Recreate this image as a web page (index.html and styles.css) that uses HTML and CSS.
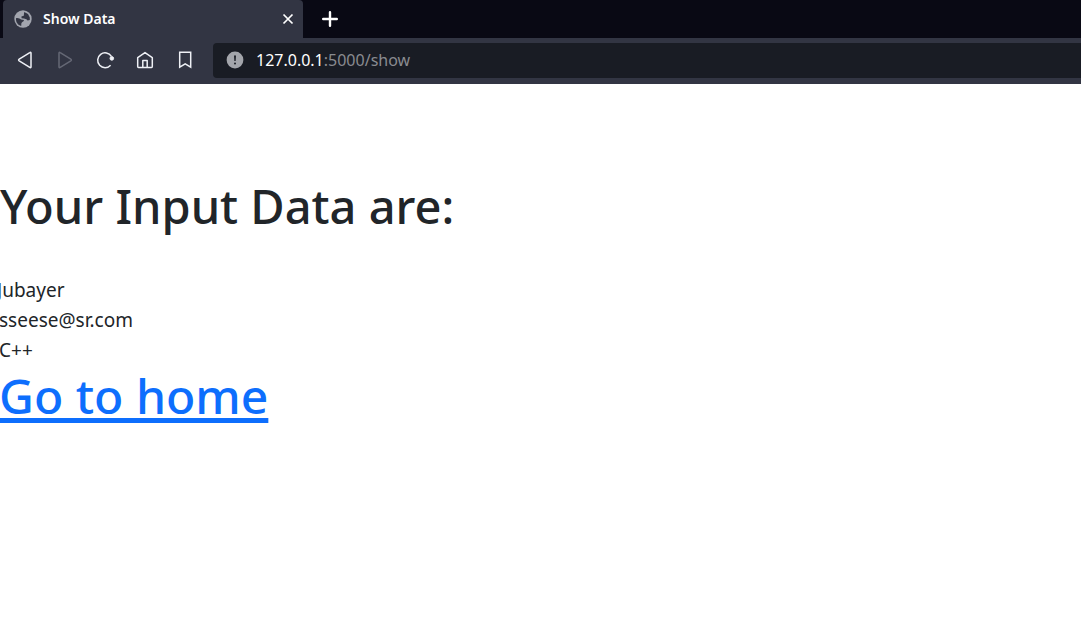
FILE: index.html
```html
<!DOCTYPE html>
<html lang="en">
<head>
<meta charset="utf-8">
<title>Show Data</title>
<link rel="stylesheet" href="styles.css">
</head>
<body>
<header class="browser">
  <div class="tabs">
    <div class="tab">
      <svg class="globe" viewBox="0 0 18 18" aria-hidden="true"><circle cx="9" cy="9" r="8.7" fill="#a2a5ae"/><path d="M2 8.2 C4 7.6 6 8.6 7 9.6 L10 10 C9.8 12 7.6 11.8 7.4 13.2 L7.2 16 C4.2 15.4 2 12.6 2 9.6ZM10.2 2 L14 4 L15.8 7.4 L15.8 10 L13.6 10.6 L12.4 9.2 L10 8.4 L7.6 8.2 L7.4 6.4 L9.8 5.8Z" fill="#323543"/></svg>
      <span class="tab-title">Show Data</span>
      <button class="icon-button close" aria-label="Close tab"><svg viewBox="0 0 12 12"><path d="M1.5 1.5 10.5 10.5M10.5 1.5 1.5 10.5" stroke="#fff" stroke-width="1.7"/></svg></button>
    </div>
    <button class="icon-button new-tab" aria-label="New tab"><svg viewBox="0 0 16 16"><path d="M8 1.2V14.8M1.2 8H14.8" stroke="#fff" stroke-width="2.4" stroke-linecap="round"/></svg></button>
  </div>
  <nav class="toolbar" aria-label="Browser">
    <button class="icon-button tool" aria-label="Back"><svg viewBox="0 0 20 20"><path d="M14.8 2.6 Q16 1.8 16 3.3 V16.7 Q16 18.2 14.8 17.4 L4.2 10.8 Q3 10 4.2 9.2Z"/></svg></button>
    <button class="icon-button tool" aria-label="Forward" disabled><svg viewBox="0 0 20 20"><path d="M5.2 2.6 Q4 1.8 4 3.3 V16.7 Q4 18.2 5.2 17.4 L15.8 10.8 Q17 10 15.8 9.2Z"/></svg></button>
    <button class="icon-button tool" aria-label="Reload"><svg viewBox="0 0 20 20"><path d="M16.4 6.4 A7.4 7.4 0 1 0 15.6 15.2"/><circle cx="16.8" cy="8.4" r="1.8" fill="#eef0f5" stroke-width="1"/></svg></button>
    <button class="icon-button tool" aria-label="Home"><svg viewBox="0 0 20 20"><path d="M2.7 16.6 V7.6 L10 2.6 L17.3 7.6 V16.6 Q17.3 17.4 16.5 17.4 H3.5 Q2.7 17.4 2.7 16.6ZM7.8 17.4V10.6H12.2V17.4" stroke-linejoin="round"/></svg></button>
    <button class="icon-button tool" aria-label="Bookmark"><svg viewBox="0 0 20 20"><path d="M4.7 2.3H15.7V17.2L10.2 13.8L4.7 17.2Z"/></svg></button>
    <div class="address">
      <svg class="notice" viewBox="0 0 18 18" aria-hidden="true"><circle cx="9" cy="9" r="8.4" fill="#a3a5ab"/><path d="M8 4.6H10L9.6 10H8.4Z" fill="#191c24"/><circle cx="9" cy="12.4" r="1" fill="#191c24"/></svg>
      <span class="url"><span class="host">127.0.0.1</span>:5000/show</span>
    </div>
  </nav>
</header>
<main class="page">
  <h1 class="heading">Your Input Data are:</h1>
  <div class="data">
    <p class="clipped">Jubayer</p>
    <p>sseese@sr.com</p>
    <p>C++</p>
  </div>
  <h2 class="heading home"><a href="/">Go to home</a></h2>
</main>
</body>
</html>
```

FILE: styles.css
```css
* { box-sizing: border-box; }
body {
  margin: 0;
  background: #fff;
  color: #212529;
  font-family: "Segoe UI", "Noto Sans", "Open Sans", sans-serif;
  overflow-x: hidden;
}
h1, h2, p { margin: 0; }
.browser { background: #323543; }
.tabs {
  display: flex;
  height: 38px;
  padding-left: 3px;
  background: #090914;
}
.tab {
  display: flex;
  align-items: center;
  width: 300px;
  padding: 0 8px 0 11px;
  border-radius: 4px 4px 0 0;
  background: #323543;
}
.globe { width: 18px; height: 18px; }
.tab-title {
  flex: 1;
  margin-left: 11px;
  padding-bottom: 2px;
  color: #fff;
  font-size: 14px;
  font-weight: 600;
}
.icon-button {
  display: grid;
  place-items: center;
  padding: 0;
  border: 0;
  background: none;
}
.close { width: 15px; height: 20px; }
.close svg { width: 12px; height: 12px; }
.new-tab { width: 54px; }
.new-tab svg { width: 16px; height: 16px; }
.toolbar {
  display: flex;
  align-items: center;
  height: 46px;
  padding: 0 0 2px 5px;
}
.tool { width: 40px; height: 40px; }
.tool svg {
  width: 20px;
  height: 20px;
  fill: none;
  stroke: #eef0f5;
  stroke-width: 1.5;
}
.tool:disabled svg { stroke: #656875; }
.address {
  display: flex;
  flex: 1;
  align-items: center;
  gap: 12px;
  height: 35px;
  margin-left: 8px;
  padding-left: 13px;
  border-radius: 4px 0 0 4px;
  background: #191c24;
}
.notice { width: 18px; height: 18px; }
.url { color: #898b90; font-size: 16px; }
.host { color: #fff; }
.page { padding-top: 92px; }
.heading {
  font-size: 47px;
  font-weight: 500;
  line-height: 60px;
}
.data {
  margin: 39px 0 1px -1px;
  font-size: 19px;
  line-height: 30px;
}
.clipped { margin-left: -2px; }
.home {
  margin-left: -1px;
  font-size: 48px;
}
.home a {
  color: #0d6efd;
  text-decoration-thickness: 5px;
  text-underline-offset: 4px;
  text-decoration-skip-ink: none;
}
```
